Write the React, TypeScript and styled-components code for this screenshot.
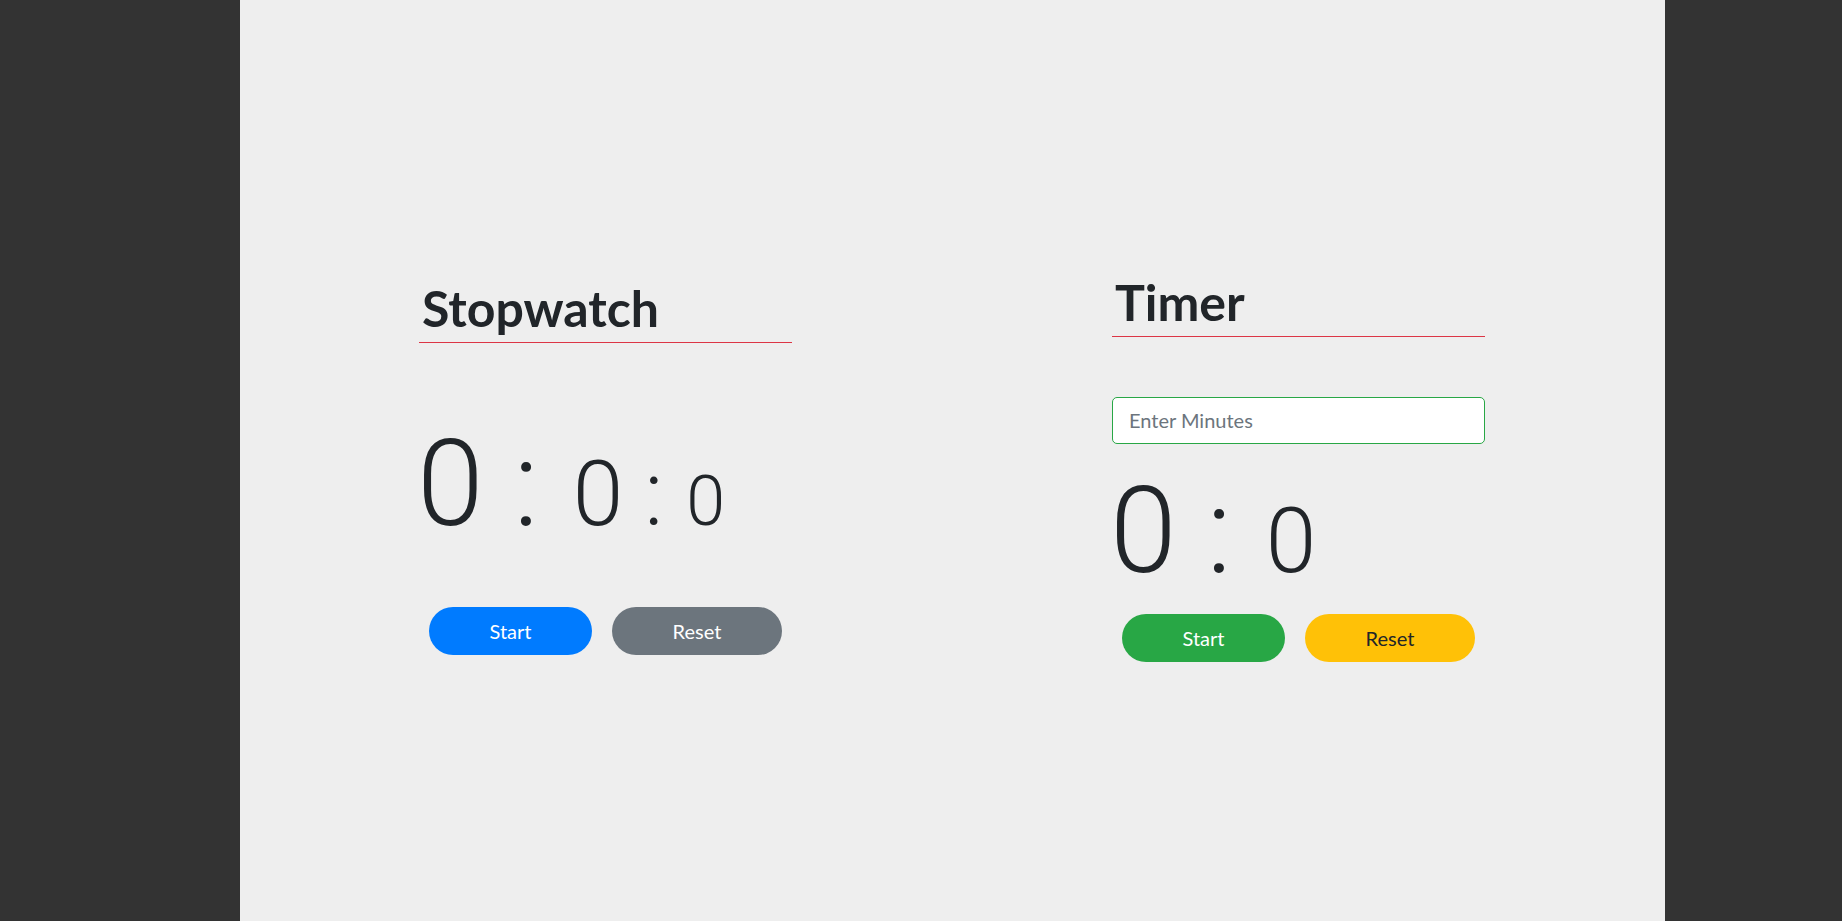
import styled, { createGlobalStyle } from 'styled-components'

const GlobalStyle = createGlobalStyle`
  html, body {
    margin: 0;
    padding: 0;
    background: #333333;
    font-family: Lato, "Open Sans", sans-serif;
    color: #212529;
  }
`

const Page = styled.div`
  width: 1425px;
  height: 921px;
  margin-left: 240px;
  background: #eeeeee;
  box-sizing: border-box;
  padding: 12px 0 0 179px;
  display: flex;
  align-items: center;
  gap: 320px;
`

const Column = styled.section`
  width: 373px;
  display: flex;
  flex-direction: column;
`

const Title = styled.h1`
  margin: 0;
  padding: 0 0 4px 3px;
  font-size: 50px;
  line-height: 1.2;
  font-weight: 700;
  border-bottom: 1px solid #dc3545;
`

const Clock = styled.div<{ $gap: number }>`
  display: flex;
  align-items: baseline;
  margin-top: ${({ $gap }) => $gap}px;
  height: 120px;
  font-family: Roboto, Lato, sans-serif;
  font-weight: 300;
`

const Digit = styled.span<{ $size: number; $left?: number }>`
  font-size: ${({ $size }) => $size}px;
  line-height: 1;
  margin-left: ${({ $left = 0 }) => $left}px;
`

const MinutesInput = styled.input`
  margin-top: 60px;
  box-sizing: border-box;
  width: 100%;
  height: 47px;
  padding: 0 16px;
  font-family: Lato, sans-serif;
  font-size: 20px;
  color: #495057;
  background: #fff;
  border: 1px solid #28a745;
  border-radius: 5px;
  outline: none;

  &::placeholder {
    color: #6c757d;
  }
`

const Actions = styled.div<{ $gap: number }>`
  display: flex;
  gap: 20px;
  margin-top: ${({ $gap }) => $gap}px;
  padding-left: 10px;
`

const Button = styled.button<{ $bg: string; $fg: string; $width: number }>`
  width: ${({ $width }) => $width}px;
  height: 48px;
  border: none;
  border-radius: 24px;
  background: ${({ $bg }) => $bg};
  color: ${({ $fg }) => $fg};
  font-family: Lato, sans-serif;
  font-size: 20px;
  cursor: pointer;
`

export default function App() {
  return (
    <>
      <GlobalStyle />
      <Page>
        <Column>
          <Title>Stopwatch</Title>
          <Clock $gap={81}>
            <Digit $size={120} $left={-2}>0</Digit>
            <Digit $size={120} $left={30}>:</Digit>
            <Digit $size={91} $left={34}>0</Digit>
            <Digit $size={91} $left={21}>:</Digit>
            <Digit $size={70} $left={23}>0</Digit>
          </Clock>
          <Actions $gap={63}>
            <Button $bg="#007bff" $fg="#fff" $width={163}>Start</Button>
            <Button $bg="#6c757d" $fg="#fff" $width={170}>Reset</Button>
          </Actions>
        </Column>
        <Column>
          <Title>Timer</Title>
          <MinutesInput type="number" placeholder="Enter Minutes" />
          <Clock $gap={27}>
            <Digit $size={120} $left={-2}>0</Digit>
            <Digit $size={120} $left={30}>:</Digit>
            <Digit $size={91} $left={34}>0</Digit>
          </Clock>
          <Actions $gap={23}>
            <Button $bg="#28a745" $fg="#fff" $width={163}>Start</Button>
            <Button $bg="#ffc107" $fg="#212529" $width={170}>Reset</Button>
          </Actions>
        </Column>
      </Page>
    </>
  )
}
